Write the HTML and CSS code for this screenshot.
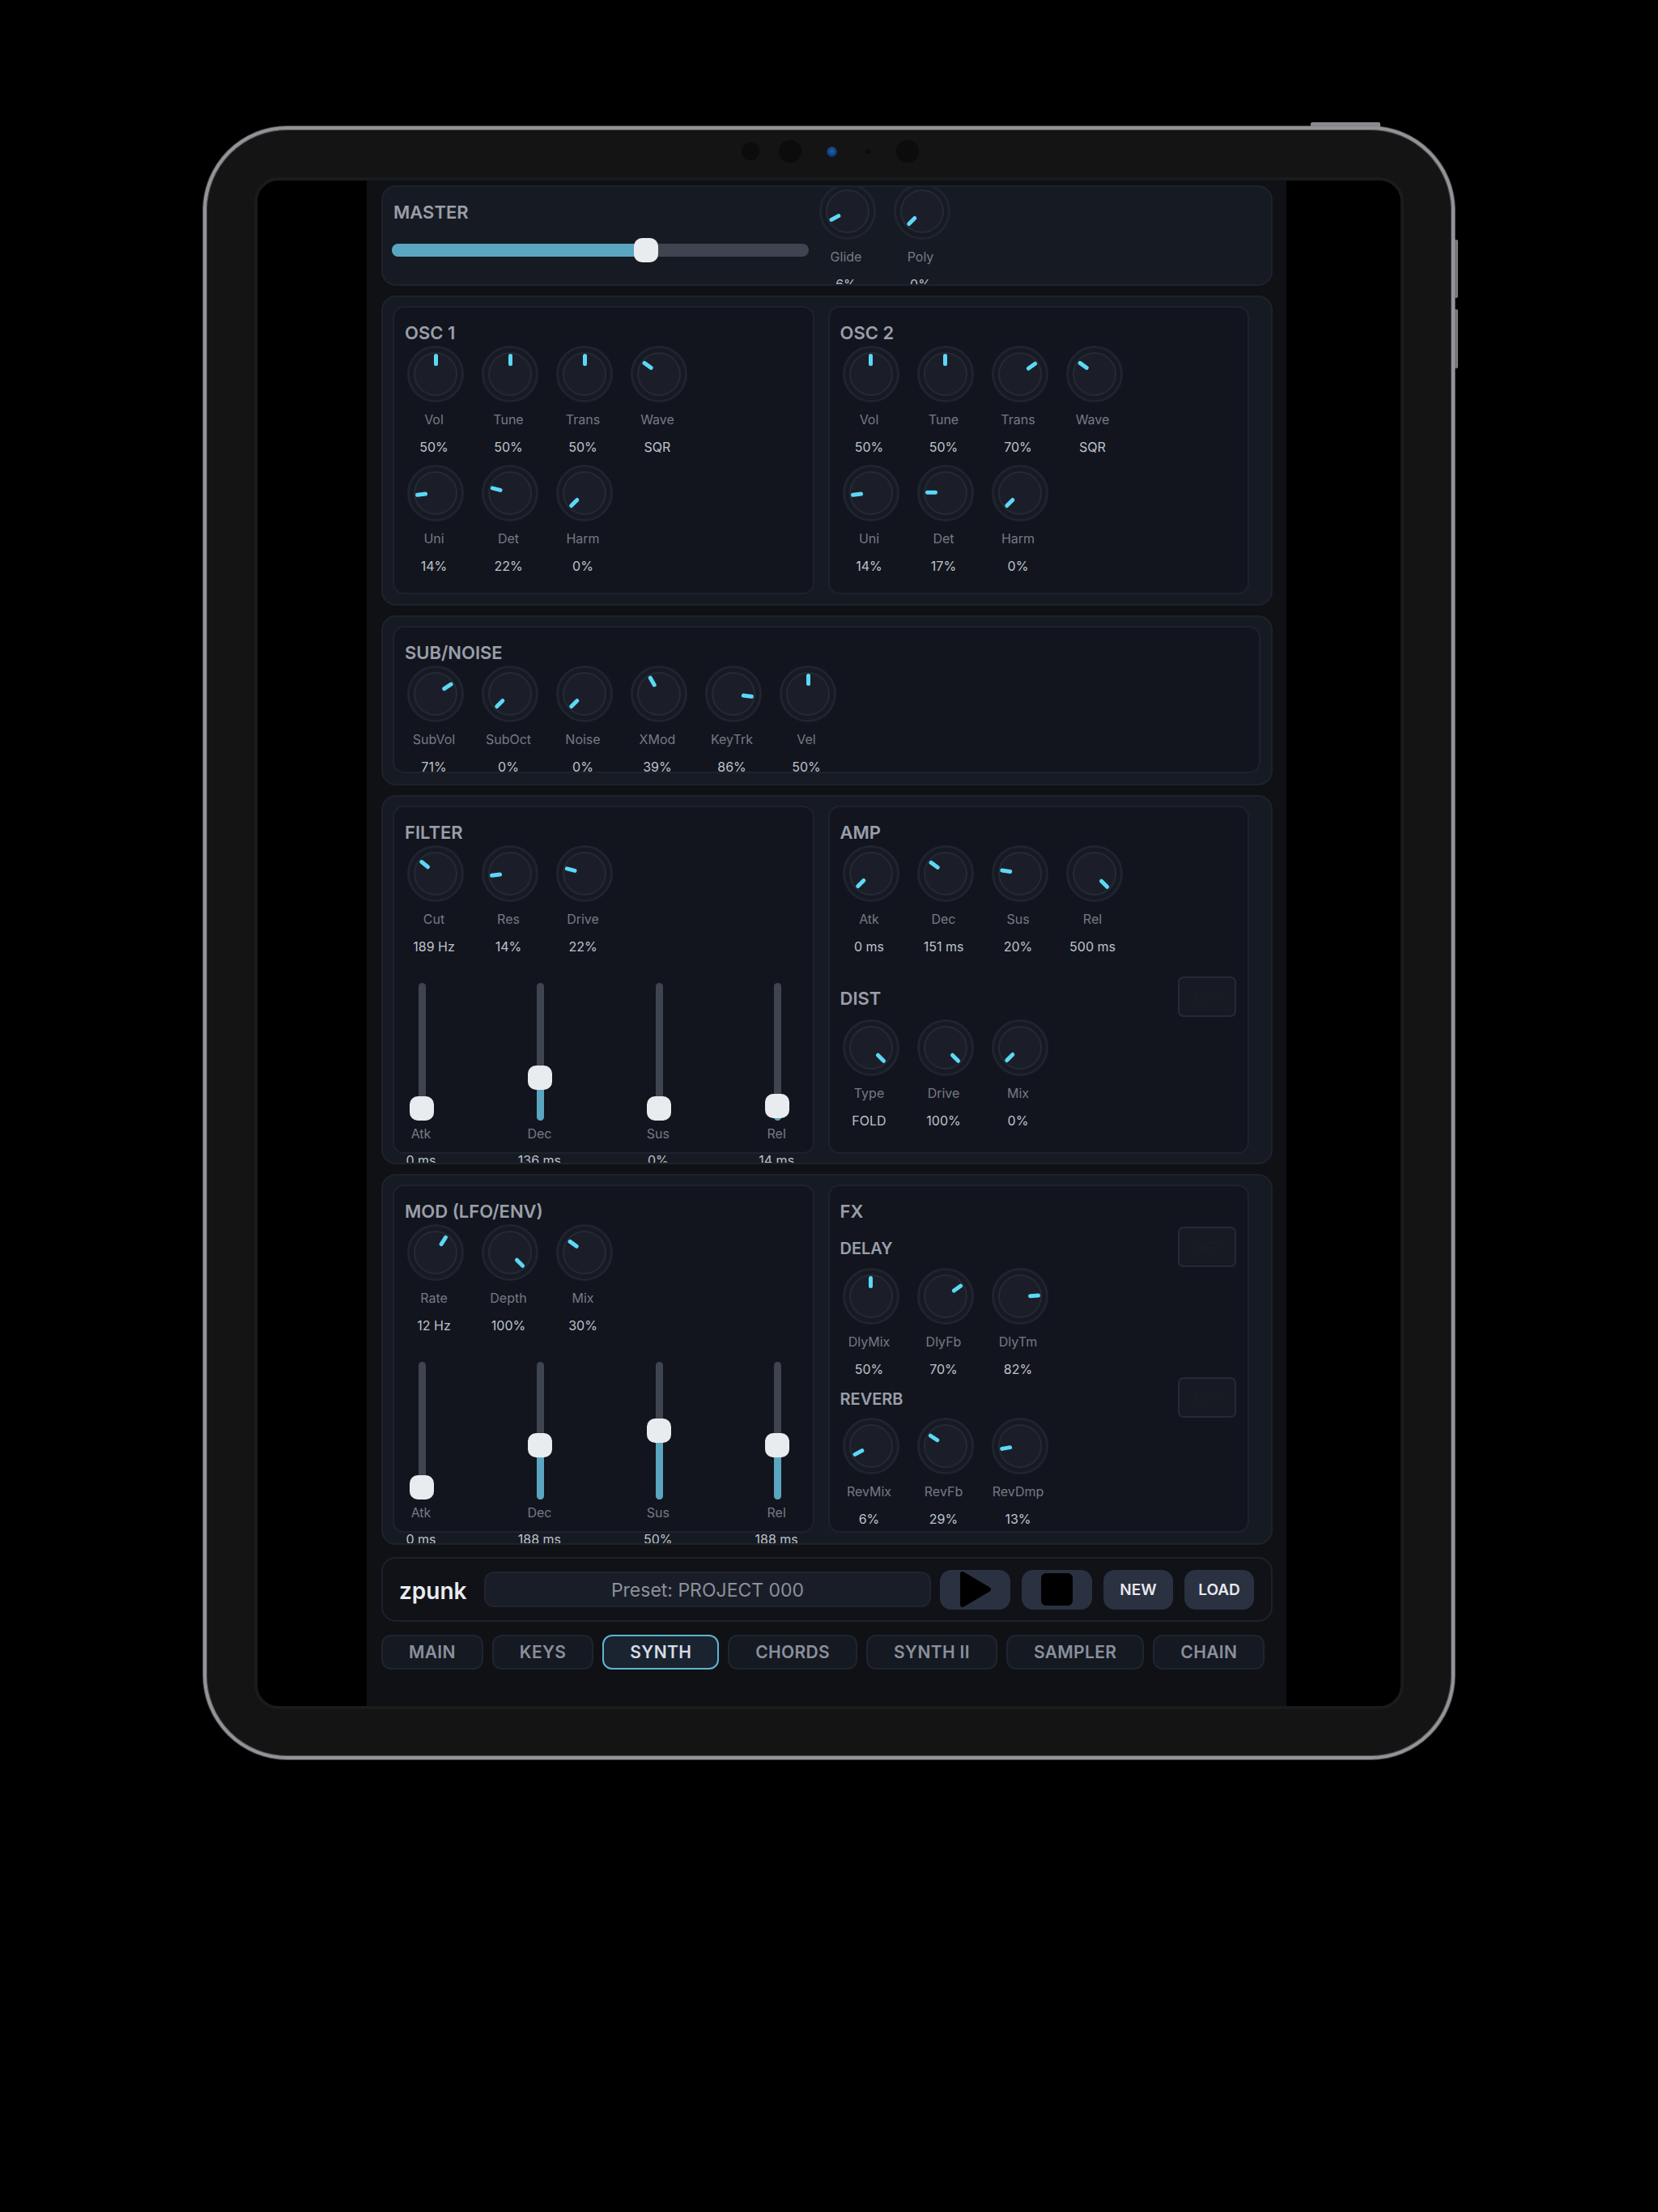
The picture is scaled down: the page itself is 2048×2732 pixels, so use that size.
FILE: index.html
```html
<!DOCTYPE html>
<html lang="en">
<head>
    <meta charset="UTF-8">
    <title>zpunk synth</title>
    <link rel="stylesheet" href="styles.css">
</head>
<body>
    <div class="device">
        <span class="btn-top"></span>
        <span class="btn-side btn-side-1"></span>
        <span class="btn-side btn-side-2"></span>
        <div class="cameras">
            <i class="cam cam-a"></i>
            <i class="cam cam-b"></i>
            <i class="cam cam-lens"></i>
            <i class="cam cam-dot"></i>
            <i class="cam cam-b"></i>
        </div>
        <div class="screen">
            <div class="app">
                <section class="panel panel-master">
                    <div class="master-left">
                        <h2 class="title">MASTER</h2>
                        <div class="hslider"><div class="hslider-fill" style="--v:61"></div><div class="hslider-thumb" style="--v:61"></div></div>
                    </div>
                    <div class="knobs">
                        <div class="cell"><div class="knob"><i class="pointer" style="--v:6"></i></div><span class="label">Glide</span><span class="value">6%</span></div>
                        <div class="cell"><div class="knob"><i class="pointer" style="--v:0"></i></div><span class="label">Poly</span><span class="value">0%</span></div>
                    </div>
                </section>

                <section class="panel panel-osc">
                    <div class="inner">
                        <h2 class="title">OSC 1</h2>
                        <div class="knobs knobs-4">
                            <div class="cell"><div class="knob"><i class="pointer" style="--v:50"></i></div><span class="label">Vol</span><span class="value">50%</span></div>
                            <div class="cell"><div class="knob"><i class="pointer" style="--v:50"></i></div><span class="label">Tune</span><span class="value">50%</span></div>
                            <div class="cell"><div class="knob"><i class="pointer" style="--v:50"></i></div><span class="label">Trans</span><span class="value">50%</span></div>
                            <div class="cell"><div class="knob"><i class="pointer" style="--v:30"></i></div><span class="label">Wave</span><span class="value">SQR</span></div>
                            <div class="cell"><div class="knob"><i class="pointer" style="--v:14"></i></div><span class="label">Uni</span><span class="value">14%</span></div>
                            <div class="cell"><div class="knob"><i class="pointer" style="--v:22"></i></div><span class="label">Det</span><span class="value">22%</span></div>
                            <div class="cell"><div class="knob"><i class="pointer" style="--v:0"></i></div><span class="label">Harm</span><span class="value">0%</span></div>
                        </div>
                    </div>
                    <div class="inner">
                        <h2 class="title">OSC 2</h2>
                        <div class="knobs knobs-4">
                            <div class="cell"><div class="knob"><i class="pointer" style="--v:50"></i></div><span class="label">Vol</span><span class="value">50%</span></div>
                            <div class="cell"><div class="knob"><i class="pointer" style="--v:50"></i></div><span class="label">Tune</span><span class="value">50%</span></div>
                            <div class="cell"><div class="knob"><i class="pointer" style="--v:70"></i></div><span class="label">Trans</span><span class="value">70%</span></div>
                            <div class="cell"><div class="knob"><i class="pointer" style="--v:30"></i></div><span class="label">Wave</span><span class="value">SQR</span></div>
                            <div class="cell"><div class="knob"><i class="pointer" style="--v:14"></i></div><span class="label">Uni</span><span class="value">14%</span></div>
                            <div class="cell"><div class="knob"><i class="pointer" style="--v:17"></i></div><span class="label">Det</span><span class="value">17%</span></div>
                            <div class="cell"><div class="knob"><i class="pointer" style="--v:0"></i></div><span class="label">Harm</span><span class="value">0%</span></div>
                        </div>
                    </div>
                </section>

                <section class="panel panel-sub">
                    <div class="inner inner-wide">
                        <h2 class="title">SUB/NOISE</h2>
                        <div class="knobs">
                            <div class="cell"><div class="knob"><i class="pointer" style="--v:71"></i></div><span class="label">SubVol</span><span class="value">71%</span></div>
                            <div class="cell"><div class="knob"><i class="pointer" style="--v:0"></i></div><span class="label">SubOct</span><span class="value">0%</span></div>
                            <div class="cell"><div class="knob"><i class="pointer" style="--v:0"></i></div><span class="label">Noise</span><span class="value">0%</span></div>
                            <div class="cell"><div class="knob"><i class="pointer" style="--v:39"></i></div><span class="label">XMod</span><span class="value">39%</span></div>
                            <div class="cell"><div class="knob"><i class="pointer" style="--v:86"></i></div><span class="label">KeyTrk</span><span class="value">86%</span></div>
                            <div class="cell"><div class="knob"><i class="pointer" style="--v:50"></i></div><span class="label">Vel</span><span class="value">50%</span></div>
                        </div>
                    </div>
                </section>

                <section class="panel panel-env">
                    <div class="inner inner-tall">
                        <h2 class="title">FILTER</h2>
                        <div class="knobs">
                            <div class="cell"><div class="knob"><i class="pointer" style="--v:31"></i></div><span class="label">Cut</span><span class="value">189 Hz</span></div>
                            <div class="cell"><div class="knob"><i class="pointer" style="--v:14"></i></div><span class="label">Res</span><span class="value">14%</span></div>
                            <div class="cell"><div class="knob"><i class="pointer" style="--v:22"></i></div><span class="label">Drive</span><span class="value">22%</span></div>
                        </div>
                        <div class="faders">
                            <div class="fader"><div class="track"><div class="track-fill" style="--v:0"></div><div class="thumb" style="--v:0"></div></div><span class="label">Atk</span><span class="value">0 ms</span></div>
                            <div class="fader"><div class="track"><div class="track-fill" style="--v:27"></div><div class="thumb" style="--v:27"></div></div><span class="label">Dec</span><span class="value">136 ms</span></div>
                            <div class="fader"><div class="track"><div class="track-fill" style="--v:0"></div><div class="thumb" style="--v:0"></div></div><span class="label">Sus</span><span class="value">0%</span></div>
                            <div class="fader"><div class="track"><div class="track-fill" style="--v:2"></div><div class="thumb" style="--v:2"></div></div><span class="label">Rel</span><span class="value">14 ms</span></div>
                        </div>
                    </div>
                    <div class="inner inner-tall">
                        <h2 class="title">AMP</h2>
                        <div class="knobs">
                            <div class="cell"><div class="knob"><i class="pointer" style="--v:0"></i></div><span class="label">Atk</span><span class="value">0 ms</span></div>
                            <div class="cell"><div class="knob"><i class="pointer" style="--v:30"></i></div><span class="label">Dec</span><span class="value">151 ms</span></div>
                            <div class="cell"><div class="knob"><i class="pointer" style="--v:20"></i></div><span class="label">Sus</span><span class="value">20%</span></div>
                            <div class="cell"><div class="knob"><i class="pointer" style="--v:100"></i></div><span class="label">Rel</span><span class="value">500 ms</span></div>
                        </div>
                        <div class="sub-head sub-head-dist">
                            <h2 class="title">DIST</h2>
                            <button class="off">OFF</button>
                        </div>
                        <div class="knobs knobs-dist">
                            <div class="cell"><div class="knob"><i class="pointer" style="--v:100"></i></div><span class="label">Type</span><span class="value">FOLD</span></div>
                            <div class="cell"><div class="knob"><i class="pointer" style="--v:100"></i></div><span class="label">Drive</span><span class="value">100%</span></div>
                            <div class="cell"><div class="knob"><i class="pointer" style="--v:0"></i></div><span class="label">Mix</span><span class="value">0%</span></div>
                        </div>
                    </div>
                </section>

                <section class="panel panel-mod">
                    <div class="inner inner-tall">
                        <h2 class="title">MOD (LFO/ENV)</h2>
                        <div class="knobs">
                            <div class="cell"><div class="knob"><i class="pointer" style="--v:62"></i></div><span class="label">Rate</span><span class="value">12 Hz</span></div>
                            <div class="cell"><div class="knob"><i class="pointer" style="--v:100"></i></div><span class="label">Depth</span><span class="value">100%</span></div>
                            <div class="cell"><div class="knob"><i class="pointer" style="--v:30"></i></div><span class="label">Mix</span><span class="value">30%</span></div>
                        </div>
                        <div class="faders">
                            <div class="fader"><div class="track"><div class="track-fill" style="--v:0"></div><div class="thumb" style="--v:0"></div></div><span class="label">Atk</span><span class="value">0 ms</span></div>
                            <div class="fader"><div class="track"><div class="track-fill" style="--v:37"></div><div class="thumb" style="--v:37"></div></div><span class="label">Dec</span><span class="value">188 ms</span></div>
                            <div class="fader"><div class="track"><div class="track-fill" style="--v:50"></div><div class="thumb" style="--v:50"></div></div><span class="label">Sus</span><span class="value">50%</span></div>
                            <div class="fader"><div class="track"><div class="track-fill" style="--v:37"></div><div class="thumb" style="--v:37"></div></div><span class="label">Rel</span><span class="value">188 ms</span></div>
                        </div>
                    </div>
                    <div class="inner inner-tall">
                        <h2 class="title">FX</h2>
                        <div class="sub-head sub-head-delay">
                            <h3 class="title title-sub">DELAY</h3>
                            <button class="off">OFF</button>
                        </div>
                        <div class="knobs">
                            <div class="cell"><div class="knob"><i class="pointer" style="--v:50"></i></div><span class="label">DlyMix</span><span class="value">50%</span></div>
                            <div class="cell"><div class="knob"><i class="pointer" style="--v:70"></i></div><span class="label">DlyFb</span><span class="value">70%</span></div>
                            <div class="cell"><div class="knob"><i class="pointer" style="--v:82"></i></div><span class="label">DlyTm</span><span class="value">82%</span></div>
                        </div>
                        <div class="sub-head">
                            <h3 class="title title-sub">REVERB</h3>
                            <button class="off">OFF</button>
                        </div>
                        <div class="knobs">
                            <div class="cell"><div class="knob"><i class="pointer" style="--v:6"></i></div><span class="label">RevMix</span><span class="value">6%</span></div>
                            <div class="cell"><div class="knob"><i class="pointer" style="--v:29"></i></div><span class="label">RevFb</span><span class="value">29%</span></div>
                            <div class="cell"><div class="knob"><i class="pointer" style="--v:13"></i></div><span class="label">RevDmp</span><span class="value">13%</span></div>
                        </div>
                    </div>
                </section>

                <div class="transport">
                    <span class="logo">zpunk</span>
                    <div class="preset">Preset: PROJECT 000</div>
                    <button class="tbtn tbtn-icon">
                        <svg width="40" height="46" viewBox="0 0 40 46"><path d="M4 4 L36 23 L4 42 Z" fill="#000" stroke="#000" stroke-width="6" stroke-linejoin="round"/></svg>
                    </button>
                    <button class="tbtn tbtn-icon">
                        <svg width="39" height="40" viewBox="0 0 39 40"><rect width="39" height="40" rx="6" fill="#000"/></svg>
                    </button>
                    <button class="tbtn">NEW</button>
                    <button class="tbtn">LOAD</button>
                </div>

                <nav class="tabs">
                    <button class="tab">MAIN</button>
                    <button class="tab">KEYS</button>
                    <button class="tab tab-active">SYNTH</button>
                    <button class="tab">CHORDS</button>
                    <button class="tab">SYNTH II</button>
                    <button class="tab">SAMPLER</button>
                    <button class="tab">CHAIN</button>
                </nav>
            </div>
        </div>
    </div>
</body>
</html>
```
FILE: styles.css
```css
* {
    box-sizing: border-box;
}
html, body {
    margin: 0;
    background: #000;
}
body {
    height: 2732px;
    padding: 156px 0 0 251px;
    font-family: "Inter", "Liberation Sans", sans-serif;
    -webkit-font-smoothing: antialiased;
    overflow: hidden;
}

/* tablet frame */
.device {
    position: relative;
    width: 1546px;
    height: 2017px;
    padding: 59px 59px 58px;
    background: #141414;
    border: 4px solid #949498;
    border-radius: 104px;
    box-shadow: 0 0 0 1px #45454a, inset 0 0 0 1px #4f4f53;
}
.btn-top {
    position: absolute;
    left: 1364px;
    top: -9px;
    width: 86px;
    height: 6px;
    background: #8a8a8e;
    border-radius: 2px 2px 0 0;
}
.btn-side {
    position: absolute;
    right: -8px;
    width: 4px;
    background: #77777b;
    border-radius: 0 2px 2px 0;
}
.btn-side-1 {
    top: 136px;
    height: 72px;
}
.btn-side-2 {
    top: 222px;
    height: 73px;
}
.cameras {
    position: absolute;
    left: 661px;
    top: 13px;
    height: 28px;
    display: flex;
    align-items: center;
}
.cam {
    display: block;
    border-radius: 50%;
    background: #0c0c0c;
}
.cam-a {
    width: 22px;
    height: 22px;
    margin-right: 24px;
}
.cam-b {
    width: 28px;
    height: 28px;
}
.cam-lens {
    width: 13px;
    height: 13px;
    margin: 0 35px 0 31px;
    background: radial-gradient(circle at 50% 45%, #1f66b4 0, #123a72 60%, #0a0f1c 100%);
}
.cam-dot {
    width: 6px;
    height: 6px;
    margin-right: 32px;
}
.screen {
    height: 100%;
    display: flex;
    justify-content: center;
    background: #000;
    border: 4px solid #181c1c;
    border-radius: 30px;
    overflow: hidden;
}

/* app */
.app {
    width: 1136px;
    height: 100%;
    margin-right: 6px;
    padding: 6px 17px 0 18px;
    background: #0f1115;
    display: flex;
    flex-direction: column;
    gap: 12px;
}
.panel {
    flex: none;
    background: #161a23;
    border: 2px solid #1d222d;
    border-radius: 18px;
    overflow: hidden;
    display: flex;
}
.panel-osc,
.panel-env,
.panel-mod,
.panel-sub {
    padding: 11px 12px;
    gap: 16.5px;
}
.panel-master {
    height: 124px;
    padding: 0 11px;
}
.panel-osc {
    height: 383px;
}
.panel-sub {
    height: 210px;
}
.panel-env {
    height: 456px;
}
.panel-mod {
    height: 458px;
}
.inner {
    flex: none;
    width: 520px;
    height: 356px;
    padding: 19px 13px 0;
    background: #12151e;
    border: 2px solid #1d222d;
    border-radius: 14px;
}
.inner:first-child {
    width: 521px;
}
.inner.inner-wide {
    width: 1072px;
    height: 182px;
}
.inner-tall {
    height: 430px;
}
.title {
    margin: 0 0 2px;
    height: 26px;
    line-height: 24px;
    font-size: 22px;
    font-weight: 600;
    color: #9a9fa9;
}
.title-sub {
    font-size: 20px;
}
.sub-head .title {
    margin: 6px 0 0;
}

/* master */
.master-left {
    flex: none;
    width: 515px;
    margin-right: 10px;
    padding-top: 19px;
}
.master-left .title {
    margin: 0 0 25px 2px;
}
.hslider {
    position: relative;
    height: 16px;
    background: #3f4550;
    border-radius: 8px;
}
.hslider-fill {
    height: 100%;
    width: calc(var(--v) * 1%);
    background: #5aa6c0;
    border-radius: 8px 0 0 8px;
}
.hslider-thumb {
    position: absolute;
    top: -7px;
    left: calc(var(--v) * 1% - 15px);
    width: 30px;
    height: 30px;
    background: #e8ecef;
    border-radius: 10px;
}
.panel-master .knobs {
    margin-top: -5px;
}

/* knobs */
.knobs {
    display: flex;
    flex-wrap: wrap;
    gap: 12px 20px;
}
.knobs-4 {
    width: 348px;
}
.knobs-dist {
    margin-top: 3px;
}
.cell {
    width: 72px;
    display: flex;
    flex-direction: column;
    align-items: center;
}
.knob {
    position: relative;
    flex: none;
    width: 70px;
    height: 70px;
    margin: 0 0 11px 3px;
    align-self: flex-start;
    background: #161a23;
    border: 3px solid #1f2430;
    border-radius: 50%;
}
.knob::before {
    content: "";
    position: absolute;
    inset: 5px;
    background: #1b1e28;
    border: 2px solid #262a35;
    border-radius: 50%;
}
.pointer {
    position: absolute;
    inset: 0;
    transform: rotate(calc(var(--v) * 2.7deg - 135deg));
}
.pointer::after {
    content: "";
    position: absolute;
    left: 50%;
    top: 7px;
    width: 5px;
    height: 15px;
    margin-left: -2.5px;
    background: #5cd8f6;
    border-radius: 3px;
}
.label,
.value {
    height: 20px;
    line-height: 20px;
    font-size: 16px;
    white-space: nowrap;
}
.label {
    color: #757a84;
    margin-bottom: 14px;
}
.value {
    color: #bfc3c9;
}

/* vertical faders */
.faders {
    display: flex;
    gap: 106.4px;
    margin-top: 35px;
}
.fader {
    width: 40px;
    display: flex;
    flex-direction: column;
    align-items: center;
}
.fader .label {
    margin-bottom: 13px;
}
.track {
    position: relative;
    flex: none;
    width: 9px;
    height: 170px;
    margin: 0 0 6px 3px;
    background: #3f4550;
    border-radius: 5px;
}
.track-fill {
    position: absolute;
    left: 0;
    right: 0;
    bottom: 0;
    height: calc(15px + var(--v) * 1.4px);
    background: #5aa6c0;
    border-radius: 0 0 5px 5px;
}
.thumb {
    position: absolute;
    left: -11px;
    bottom: calc(var(--v) * 1.4px);
    width: 30px;
    height: 30px;
    background: #e8ecef;
    border-radius: 10px;
}

/* section headers with on/off */
.sub-head {
    height: 50px;
    display: flex;
    align-items: center;
    justify-content: space-between;
}
.sub-head-dist {
    margin-top: 27px;
}
.sub-head-delay {
    margin: 5px 0 1px;
}
.off {
    width: 72px;
    height: 50px;
    margin-right: 1px;
    padding: 0;
    font: 500 16px "Inter", sans-serif;
    color: #1a1d25;
    background: #171a22;
    border: 2px solid #252a36;
    border-radius: 7px;
}

/* transport */
.transport {
    flex: none;
    height: 80px;
    margin-top: 3px;
    padding: 0 21px 0 20px;
    display: flex;
    align-items: center;
    gap: 14px;
    background: #101217;
    border: 2px solid #1c212c;
    border-radius: 18px;
}
.logo {
    flex: none;
    width: 91px;
    padding-top: 4px;
    font-size: 28px;
    font-weight: 600;
    color: #e9ebee;
}
.preset {
    flex: none;
    width: 552px;
    height: 44px;
    margin: 0 -3px 0 0;
    line-height: 42px;
    text-align: center;
    font-size: 23px;
    color: #8b909a;
    background: #191d27;
    border: 2px solid #1f2430;
    border-radius: 12px;
}
.tbtn {
    flex: none;
    width: 86px;
    height: 49px;
    padding: 0;
    display: flex;
    align-items: center;
    justify-content: center;
    font: 600 19px "Inter", sans-serif;
    color: #e6e8ec;
    background: #2a3140;
    border: 0;
    border-radius: 14px;
}
.tbtn-icon {
    width: 87px;
}

/* tabs */
.tabs {
    flex: none;
    display: flex;
    gap: 11px;
    margin-top: 4px;
}
.tab {
    flex: none;
    height: 43px;
    padding: 0 32px;
    font: 600 21px "Inter", sans-serif;
    letter-spacing: 0.35px;
    color: #8a909c;
    background: #151922;
    border: 2px solid #1f2430;
    border-radius: 12px;
}
.tab-active {
    color: #d8dce2;
    background: #1a2330;
    border-color: #5fb4cf;
}
```
